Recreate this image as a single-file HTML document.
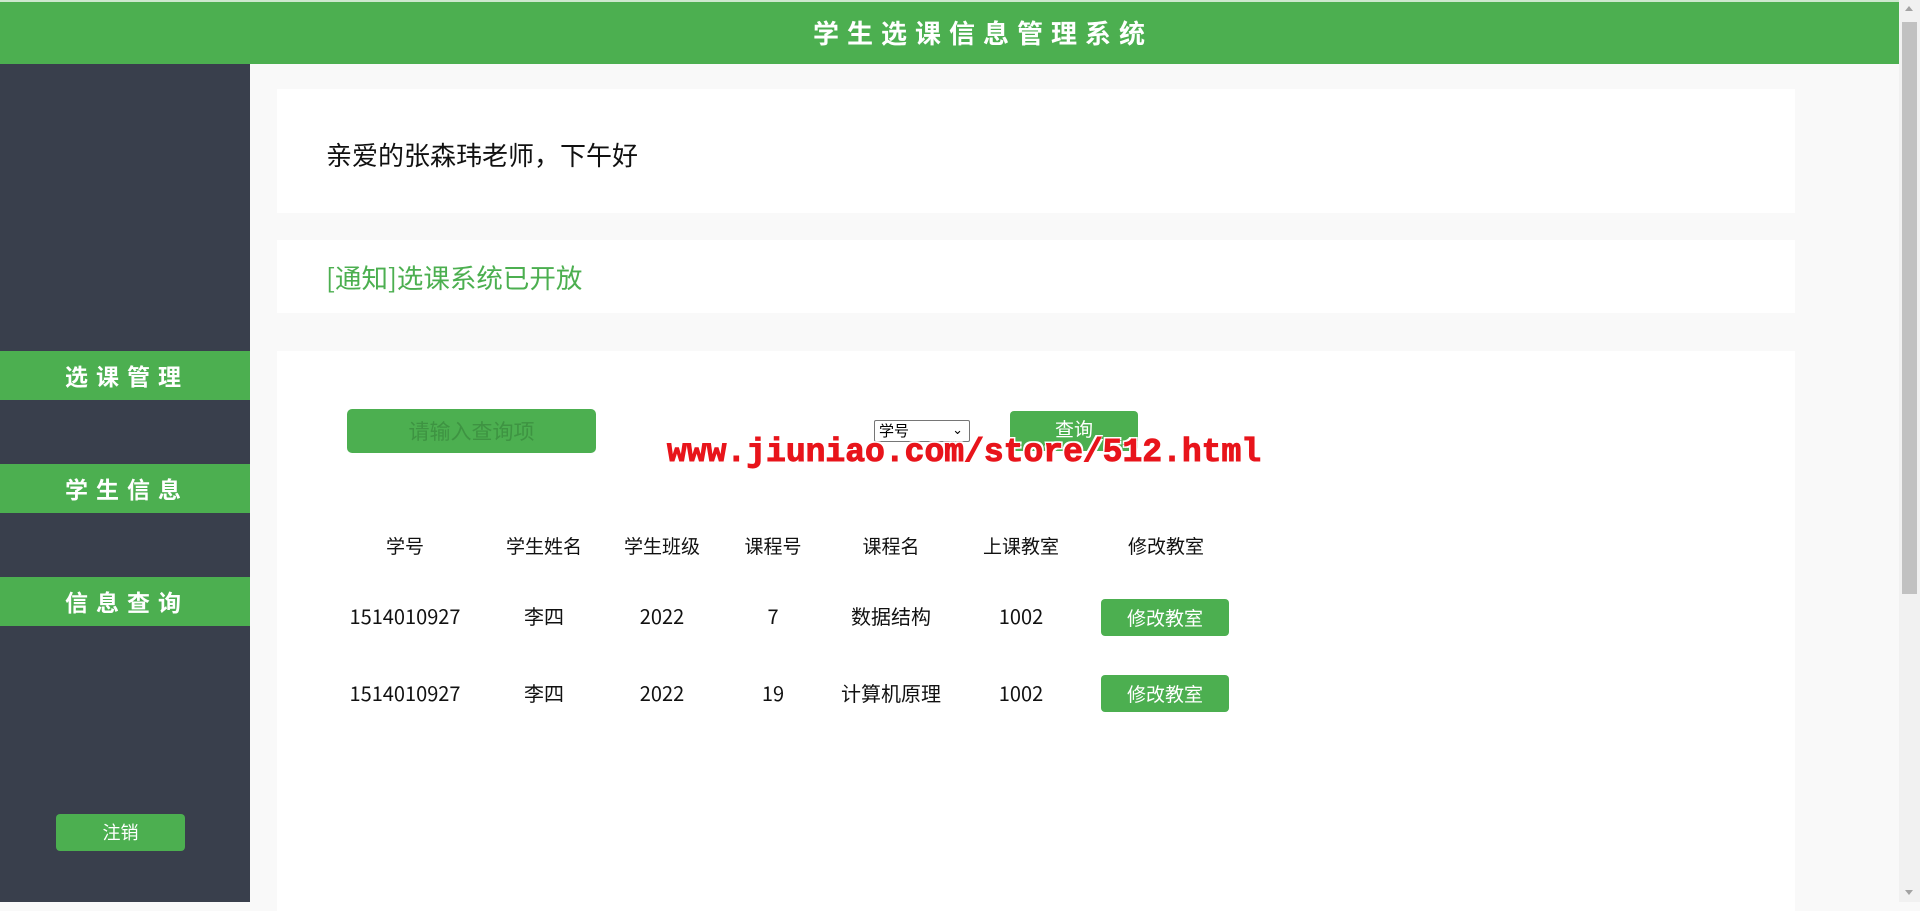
<!DOCTYPE html>
<html><head><meta charset="utf-8"><style>
*{margin:0;padding:0;box-sizing:border-box}
body{width:1920px;height:902px;overflow:hidden;background:#f9f9f9;font-family:"Noto Sans CJK SC","Liberation Sans",sans-serif;position:relative}
.a{position:absolute}
.hdr{left:0;top:0;width:1899px;height:64px;background:#4caf50;border-top:2px solid #cde8ce}
.title{left:0;top:0;width:1966px;height:64px;line-height:66px;text-align:center;color:#fff;font-size:26px;letter-spacing:8px;font-weight:bold}
.side{left:0;top:64px;width:250px;height:838px;background:#393f4c}
.menu{left:0;width:250px;height:49px;background:#4caf50;color:#fff;font-size:23px;letter-spacing:8px;text-align:center;line-height:49px;padding-left:4px;font-weight:bold}
.card{background:#fff;left:277px;width:1518px}
.btn{background:#4caf50;color:#fff;border-radius:4px;text-align:center}
.th,.td{position:absolute;transform:translateX(-50%);white-space:nowrap;color:#111;font-size:19px;line-height:26px}
.td{font-size:20px}
.wm{left:667px;top:434px;font-family:"Liberation Mono",monospace;font-weight:bold;font-size:33px;color:#e8141b;-webkit-text-stroke:1px #e8141b;text-shadow:-2px -2px 0 #fff,2px -2px 0 #fff,-2px 2px 0 #fff,2px 2px 0 #fff,0 2px 0 #fff,0 -2px 0 #fff;white-space:nowrap}
</style></head><body>
<div class="a hdr"></div>
<div class="a title">学生选课信息管理系统</div>
<div class="a side"></div>
<div class="a menu" style="top:351px">选课管理</div>
<div class="a menu" style="top:464px">学生信息</div>
<div class="a menu" style="top:577px">信息查询</div>
<div class="a btn" style="left:56px;top:814px;width:129px;height:37px;line-height:37px;font-size:18px">注销</div>

<div class="a card" style="top:89px;height:124px"></div>
<div class="a" style="left:326px;top:137px;font-size:26px;color:#111;line-height:36px">亲爱的张森玮老师，下午好</div>
<div class="a card" style="top:240px;height:73px"></div>
<div class="a" style="left:326px;top:259px;font-size:26.5px;color:#4caf50;line-height:36px">[通知]选课系统已开放</div>
<div class="a card" style="top:351px;height:560px"></div>

<div class="a btn" style="left:347px;top:409px;width:249px;height:44px;line-height:44px;font-size:21px;color:#3e9342;border-radius:5px">请输入查询项</div>
<div class="a" style="left:874px;top:420px;width:96px;height:22px;border:1px solid #767676;background:#fff;font-size:15px;line-height:20px;padding-left:4px;border-radius:2px">学号<span style="position:absolute;right:6px;top:-2px;font-size:13px">⌄</span></div>
<div class="a btn" style="left:1010px;top:411px;width:128px;height:40px;font-size:19px;line-height:36px">查询</div>
<div class="a wm">www.jiuniao.com/store/512.html</div>

<div class="th" style="left:405px;top:533px">学号</div>
<div class="th" style="left:544px;top:533px">学生姓名</div>
<div class="th" style="left:662px;top:533px">学生班级</div>
<div class="th" style="left:773px;top:533px">课程号</div>
<div class="th" style="left:891px;top:533px">课程名</div>
<div class="th" style="left:1021px;top:533px">上课教室</div>
<div class="th" style="left:1166px;top:533px">修改教室</div>

<div class="td" style="left:405px;top:603px">1514010927</div>
<div class="td" style="left:544px;top:603px">李四</div>
<div class="td" style="left:662px;top:603px">2022</div>
<div class="td" style="left:773px;top:603px">7</div>
<div class="td" style="left:891px;top:603px">数据结构</div>
<div class="td" style="left:1021px;top:603px">1002</div>
<div class="a btn" style="left:1101px;top:599px;width:128px;height:37px;line-height:37px;font-size:19px">修改教室</div>

<div class="td" style="left:405px;top:680px">1514010927</div>
<div class="td" style="left:544px;top:680px">李四</div>
<div class="td" style="left:662px;top:680px">2022</div>
<div class="td" style="left:773px;top:680px">19</div>
<div class="td" style="left:891px;top:680px">计算机原理</div>
<div class="td" style="left:1021px;top:680px">1002</div>
<div class="a btn" style="left:1101px;top:675px;width:128px;height:37px;line-height:37px;font-size:19px">修改教室</div>

<div class="a" style="left:1899px;top:0;width:21px;height:902px;background:#f1f1f1"></div>
<div class="a" style="left:1902px;top:22px;width:15px;height:572px;background:#c1c1c1"></div>
<div class="a" style="left:1905px;top:6px;width:0;height:0;border-left:4px solid transparent;border-right:4px solid transparent;border-bottom:5px solid #a3a3a3"></div>
<div class="a" style="left:1905px;top:890px;width:0;height:0;border-left:4px solid transparent;border-right:4px solid transparent;border-top:5px solid #a3a3a3"></div>
</body></html>
